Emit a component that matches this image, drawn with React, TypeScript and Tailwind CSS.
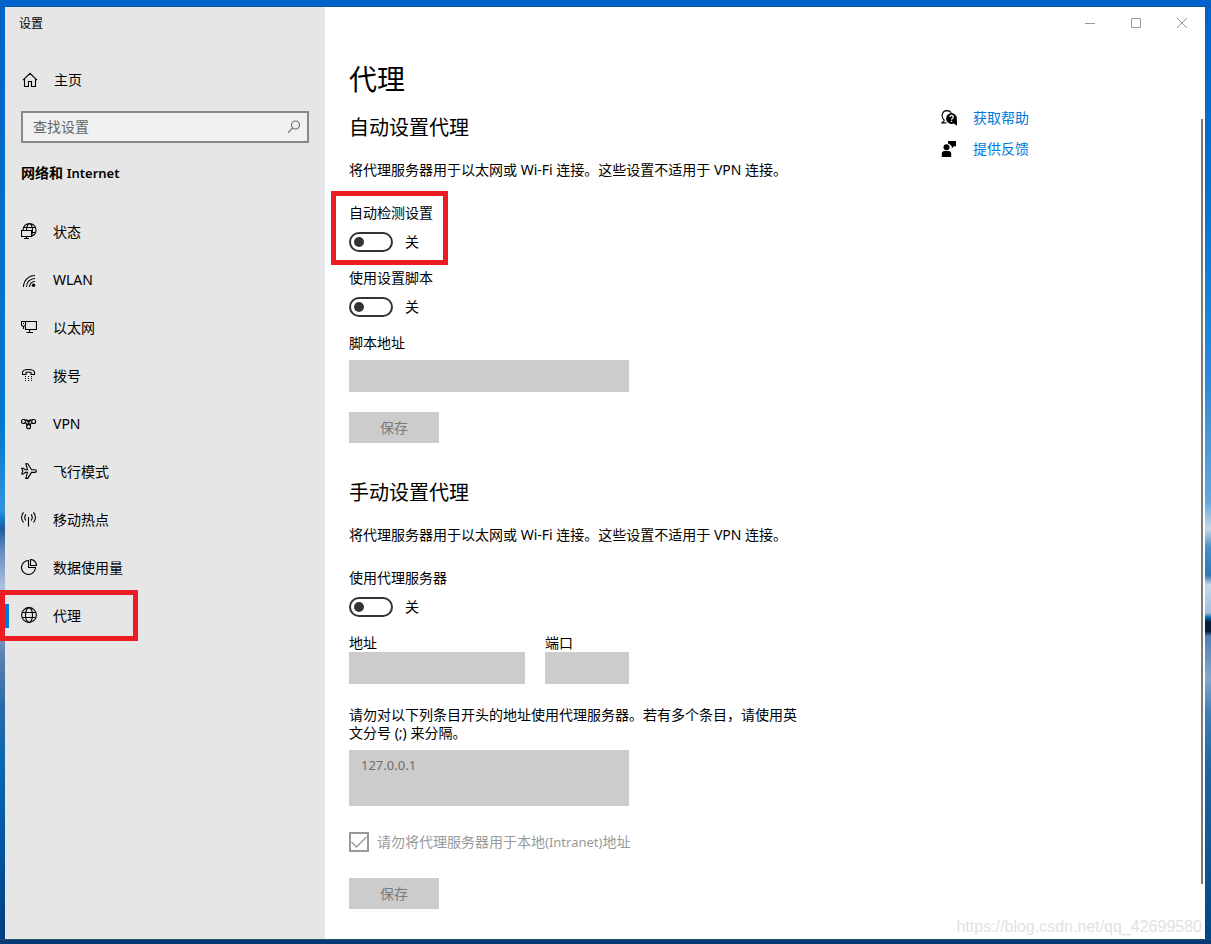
import React from "react";

type IconProps = { children: React.ReactNode; className?: string };

const Icon = ({ children, className = "" }: IconProps) => (
  <svg
    viewBox="0 0 16 16"
    fill="none"
    stroke="currentColor"
    strokeWidth="1.1"
    aria-hidden="true"
    className={`h-4 w-4 shrink-0 ${className}`}
  >
    {children}
  </svg>
);

const HomeIcon = () => (
  <Icon>
    <path d="M1 8.2 8 1.3l7 6.9M2.5 7v7.5h4v-5h3v5h4V7" />
  </Icon>
);

const SearchIcon = () => (
  <Icon className="text-[#6a6a6a]">
    <circle cx="9.5" cy="6" r="4" />
    <path d="M6.6 8.9 2 13.8" />
  </Icon>
);

const StatusIcon = () => (
  <Icon>
    <path d="M2 7C2 3.300 4.900.6 8.500.6S15 3.300 15 7c0 2.700-1.500 5-4 6M5.500 7.500C5.500 3.500 7 .6 8.500.6s3 2.900 3 6.400-.3 4.200-1 6M2.500 4.500h12M11 9.500h3.500" />
    <path d="M.5 7.500h10v6H.5zM3 15.500h5M5.500 13.500v2" />
  </Icon>
);

const WlanIcon = () => (
  <Icon>
    <path d="M2.500 16C2.500 9.500 7.500 4.500 14 4.500M5.500 16c0-4.700 3.500-8.500 8.500-8.500M8.500 16c0-3.200 2.200-5.500 5.500-5.500" />
    <circle cx="12.500" cy="14.300" r="1.700" fill="currentColor" stroke="none" />
  </Icon>
);

const EthernetIcon = () => (
  <Icon>
    <path d="M4.500 2.500h11v8h-11v-3M.5 2.500h4v4l-2 1-2-1zM2.500 7.500V10M8.500 10.500v3M5.500 13.500h6.500M2 4.500h1" />
  </Icon>
);

const DialupIcon = () => (
  <Icon>
    <path d="M1.500 7.500v-2c0-2 2.500-3 6-3s6 1 6 3v2H10v-2c-1.500-.6-3.500-.6-5 0v2z" />
    <path d="M4 9.500h1M7 9.500h1M10 9.500h1M4 11.500h1M7 11.500h1M10 11.500h1M4 13.500h1M7 13.500h1M10 13.500h1" />
  </Icon>
);

const VpnIcon = () => (
  <Icon>
    <circle cx="2.500" cy="6.500" r="2" />
    <circle cx="12.700" cy="6.500" r="2" />
    <circle cx="7.600" cy="11.700" r="2" />
    <path d="M3 4.500c2 0 3 .8 4 2.300l2.500 4M4.300 7.500c1 .6 1.400 1.600 1.800 2.600M12.200 4.500c-2 0-3 .8-4 2.300l-2.500 4M10.900 7.500c-1 .6-1.400 1.600-1.800 2.600M5.500 4.500l2 2 2-2" />
  </Icon>
);

const PlaneIcon = () => (
  <Icon>
    <path d="M.8 5.300h1.700l1.800 1.500h2.200L4.800.700h2l3.700 6.100h3.300c2.200 0 2.200 2.600 0 2.600h-3.300l-3.700 6h-2l1.700-6H4.300L2.500 11H.8l1-3z" />
  </Icon>
);

const HotspotIcon = () => (
  <Icon>
    <path d="M7.500 6v9.500M5 9.500c-1.700-1.600-1.700-4.400 0-6M2.500 11.500c-2.600-2.700-2.600-7.300 0-10M10 9.500c1.700-1.600 1.700-4.400 0-6M12.500 11.500c2.600-2.700 2.600-7.300 0-10" />
  </Icon>
);

const DataUsageIcon = () => (
  <Icon>
    <path d="M7.500 1.500a7 7 0 1 0 7 7h-7z" />
    <path d="M9.500.5v6h6a6 6 0 0 0-6-6z" />
  </Icon>
);

const GlobeIcon = () => (
  <Icon>
    <circle cx="8" cy="8" r="7.400" />
    <ellipse cx="8" cy="8" rx="3.500" ry="7.400" />
    <path d="M1.500 5.500h13M1.500 10.500h13" />
  </Icon>
);

const HelpIcon = () => (
  <Icon>
    <path d="M3.500 10.500C-.5 7 .8.800 5.800.600c2.200 0 3.700 1 4.500 2.200M3.500 10.300.8 12.900h4.500" />
    <circle cx="10.500" cy="8.500" r="5.400" fill="currentColor" stroke="none" />
    <path d="M12 13l4 2.800V10z" fill="currentColor" stroke="none" />
    <path
      d="M9 7c0-2.200 3.300-2.200 3.300 0 0 1.300-1.700 1.300-1.700 2.700M10.600 10.700v1.200"
      stroke="white"
      strokeWidth="1.200"
    />
  </Icon>
);

const FeedbackIcon = () => (
  <Icon>
    <g fill="currentColor" stroke="none">
      <circle cx="5.500" cy="6.300" r="3" />
      <path d="M.8 16v-3.300c0-1.700 1-2.700 2.700-2.700h4c1.700 0 2.700 1 2.700 2.700V16zM7 0h8v5.200h-2.200l-2 2.300V5.200L9 3.500 7 2.600z" />
    </g>
  </Icon>
);

const navItems = [
  { label: "状态", icon: <StatusIcon /> },
  { label: "WLAN", icon: <WlanIcon /> },
  { label: "以太网", icon: <EthernetIcon /> },
  { label: "拨号", icon: <DialupIcon /> },
  { label: "VPN", icon: <VpnIcon /> },
  { label: "飞行模式", icon: <PlaneIcon /> },
  { label: "移动热点", icon: <HotspotIcon /> },
  { label: "数据使用量", icon: <DataUsageIcon /> },
  { label: "代理", icon: <GlobeIcon />, active: true },
];

const Toggle = ({ id, label }: { id: string; label: string }) => (
  <div>
    <label htmlFor={id} className="block">
      {label}
    </label>
    <div className="mt-[10px] flex h-5 items-center gap-3">
      <input
        id={id}
        type="checkbox"
        role="switch"
        className="flex h-5 w-11 appearance-none items-center rounded-full border-2 border-[#333] before:ml-[3px] before:block before:h-[10px] before:w-[10px] before:rounded-full before:bg-[#333]"
      />
      <span>关</span>
    </div>
  </div>
);

const SaveButton = () => (
  <button
    type="button"
    disabled
    className="block h-[31px] w-[90px] bg-[#ccc] text-[#7a7a7a]"
  >
    保存
  </button>
);

const Sidebar = () => (
  <aside className="w-80 shrink-0 bg-[#e6e6e6]">
    <p className="px-[14px] pt-[9px] text-xs leading-4">设置</p>
    <a href="#home" className="mt-[31px] flex h-[34px] items-center gap-4 px-[17px]">
      <HomeIcon />
      主页
    </a>
    <div className="mx-4 mt-[14px] flex h-8 items-center border-2 border-[#888] bg-[#f0f0f0] pr-[5px]">
      <input
        type="text"
        aria-label="查找设置"
        placeholder="查找设置"
        className="min-w-0 flex-1 bg-transparent px-[10px] outline-none placeholder:text-[#666]"
      />
      <SearchIcon />
    </div>
    <h2 className="mx-4 mt-[21px] font-semibold">
      网络和 <span className="text-[13px]">Internet</span>
    </h2>
    <nav className="mt-[26px]">
      {navItems.map((item) => (
        <a
          key={item.label}
          href="#"
          className="relative flex h-12 items-center"
        >
          <span
            className={
              item.active ? "h-6 w-1 bg-[#0078d7]" : "h-6 w-1 bg-transparent"
            }
          />
          <span className="mb-[2px] ml-3 mr-4">{item.icon}</span>
          {item.label}
          {item.active && (
            <span className="absolute -left-[5px] -top-[2px] h-[51px] w-[138px] border-[5px] border-[#ed1c24]" />
          )}
        </a>
      ))}
    </nav>
  </aside>
);

const WindowControls = () => (
  <div className="flex h-8 justify-end text-[#999]">
    <button type="button" aria-label="最小化" className="flex w-[46px] items-center justify-center">
      <svg viewBox="0 0 10 10" className="h-[10px] w-[10px]" stroke="currentColor" fill="none">
        <path d="M0 5.500h10" />
      </svg>
    </button>
    <button type="button" aria-label="最大化" className="flex w-[46px] items-center justify-center">
      <svg viewBox="0 0 10 10" className="h-[10px] w-[10px]" stroke="currentColor" fill="none">
        <path d="M.5.5h9v9h-9z" />
      </svg>
    </button>
    <button type="button" aria-label="关闭" className="flex w-[46px] items-center justify-center">
      <svg viewBox="0 0 10 10" className="h-[10px] w-[10px]" stroke="currentColor" fill="none">
        <path d="M0 0l10 10M10 0 0 10" />
      </svg>
    </button>
  </div>
);

const ProxySettings = () => (
  <div className="min-w-0 flex-1 pb-[30px] pl-6 pt-[22px]">
    <h1 className="text-[28px] leading-9">代理</h1>
    <section className="mt-[17px]">
      <h2 className="text-xl leading-7">自动设置代理</h2>
      <p className="mt-[19px]">
        将代理服务器用于以太网或 Wi-Fi 连接。这些设置不适用于 VPN 连接。
      </p>
      <div className="relative mt-[25px]">
        <Toggle id="auto-detect" label="自动检测设置" />
        <span className="pointer-events-none absolute -left-[18px] -top-[13px] h-[74px] w-[117px] border-[5px] border-[#ed1c24]" />
      </div>
      <div className="mt-[17px]">
        <Toggle id="use-script" label="使用设置脚本" />
      </div>
      <label htmlFor="script-address" className="mt-[17px] block">
        脚本地址
      </label>
      <input
        id="script-address"
        type="text"
        disabled
        className="mb-5 mt-2 block h-8 w-[280px] bg-[#ccc] px-3"
      />
      <SaveButton />
    </section>
    <section className="mt-9">
      <h2 className="text-xl leading-7">手动设置代理</h2>
      <p className="mb-[25px] mt-[19px]">
        将代理服务器用于以太网或 Wi-Fi 连接。这些设置不适用于 VPN 连接。
      </p>
      <Toggle id="use-proxy" label="使用代理服务器" />
      <div className="mt-[17px] flex gap-5">
        <div>
          <label htmlFor="address" className="block">
            地址
          </label>
          <input id="address" type="text" disabled className="block h-8 w-44 bg-[#ccc] px-3" />
        </div>
        <div>
          <label htmlFor="port" className="block">
            端口
          </label>
          <input id="port" type="text" disabled className="block h-8 w-[84px] bg-[#ccc] px-3" />
        </div>
      </div>
      <label htmlFor="exceptions" className="mt-[22px] block max-w-[456px]">
        请勿对以下列条目开头的地址使用代理服务器。若有多个条目，请使用英文分号 (;) 来分隔。
      </label>
      <textarea
        id="exceptions"
        disabled
        defaultValue="127.0.0.1"
        className="mt-2 block h-14 w-[280px] resize-none bg-[#ccc] px-3 py-[6px] text-[13px] text-[#6d6d6d]"
      />
      <div className="mb-[26px] mt-[26px] flex h-5 items-center gap-2 text-[#999]">
        <span className="grid h-5 w-5">
          <input
            id="bypass-local"
            type="checkbox"
            disabled
            defaultChecked
            className="col-start-1 row-start-1 h-5 w-5 appearance-none border-2 border-[#999]"
          />
          <svg
            viewBox="0 0 20 20"
            fill="none"
            stroke="currentColor"
            strokeWidth="1.300"
            className="pointer-events-none col-start-1 row-start-1 h-5 w-5"
          >
            <path d="M2.500 10l5 5L17.500 5" />
          </svg>
        </span>
        <label htmlFor="bypass-local">
          请勿将代理服务器用于本地<span className="text-[13px]">(Intranet)</span>地址
        </label>
      </div>
      <SaveButton />
    </section>
  </div>
);

const App = () => {
  return (
    <div className="flex min-h-screen flex-col bg-[#0061c8] font-['Noto_Sans','Noto_Sans_CJK_SC',sans-serif] text-sm leading-[18px] text-black">
      <div className="h-[7px] bg-[linear-gradient(#0062cb_80%,#174f88)]" />
      <div className="flex flex-1">
        <div className="w-[5px] shrink-0 bg-[linear-gradient(#0061c8,#0072cc_30%,#0078cf_45%,#3393dc_54%,#1677c4_55%,#205c9c_56%,#5d86ba_58%,#a9bedd_62%,#8da9cf_65%,#597fae_70%,#2a6aa8_75%,#0868b0_81%,#0055a0_90%,#003f7f)]" />
        <div className="relative flex min-w-0 flex-1 bg-white">
          <Sidebar />
          <main className="flex min-w-0 flex-1 flex-col">
            <WindowControls />
            <div className="flex flex-1">
              <ProxySettings />
              <div className="w-[260px] shrink-0 pt-[70px] text-[#0078d7]">
                <a href="#help" className="flex items-center gap-4">
                  <span className="text-black">
                    <HelpIcon />
                  </span>
                  获取帮助
                </a>
                <a href="#feedback" className="mt-[13px] flex items-center gap-4">
                  <span className="text-black">
                    <FeedbackIcon />
                  </span>
                  提供反馈
                </a>
              </div>
              <div className="mb-[55px] mr-[2px] mt-20 w-[2px] bg-[#7a7a7a]" />
            </div>
          </main>
          <span className="absolute bottom-0 right-[3px] font-['Liberation_Sans',sans-serif] text-base leading-6 text-[#e2e2e2]">
            https://blog.csdn.net/qq_42699580
          </span>
        </div>
        <div className="w-[6px] shrink-0 bg-[linear-gradient(#0061c8,#0b70ca_20%,#2b8bd8_40%,#62a7df_53%,#c5d8e8_56%,#418fcb_58%,#2b79bd_61%,#c9d9e9_62%,#9dbfdf_65%,#0768b2_65.5%,#061c3c_66%,#061c3c_67%,#4b80b5_67.500%,#80a8d0_72%,#397db6_76%,#1b65a5_82%,#00478a)]" />
      </div>
      <div className="h-[5px] bg-[linear-gradient(#3b556e,#053a74_30%)]" />
    </div>
  );
};

export default App;
